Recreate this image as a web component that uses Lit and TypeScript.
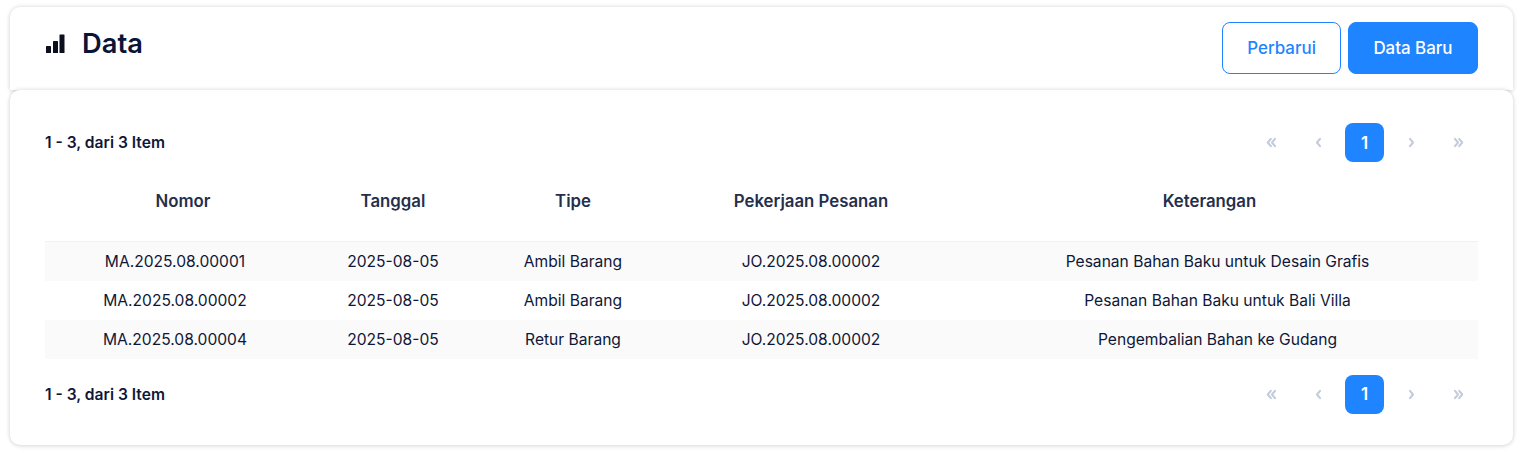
import { LitElement, html, css } from 'lit';
import { customElement } from 'lit/decorators.js';

const rows = [
  ['MA.2025.08.00001', '2025-08-05', 'Ambil Barang', 'JO.2025.08.00002', 'Pesanan Bahan Baku untuk Desain Grafis'],
  ['MA.2025.08.00002', '2025-08-05', 'Ambil Barang', 'JO.2025.08.00002', 'Pesanan Bahan Baku untuk Bali Villa'],
  ['MA.2025.08.00004', '2025-08-05', 'Retur Barang', 'JO.2025.08.00002', 'Pengembalian Bahan ke Gudang'],
];

const columns = ['Nomor', 'Tanggal', 'Tipe', 'Pekerjaan Pesanan', 'Keterangan'];

@customElement('app-root')
export class AppRoot extends LitElement {
  static styles = css`
    :host {
      display: block;
      font-family: Inter, "Noto Sans", sans-serif;
      color: #0f1738;
      background: #fff;
      height: 454px;
      box-sizing: border-box;
      padding: 7px 13px 0 10px;
    }
    .head,
    .body {
      background: #fff;
      box-shadow: 0 0 4px rgba(0, 0, 0, 0.16), 0 2px 5px rgba(0, 0, 0, 0.05);
    }
    .head {
      height: 83px;
      box-sizing: border-box;
      padding: 15px 35px 0;
      display: flex;
      justify-content: space-between;
      align-items: flex-start;
      border-radius: 10px 10px 0 0;
    }
    .title {
      display: flex;
      align-items: center;
      gap: 17px;
      font-size: 27.3px;
      font-weight: 600;
      line-height: 43px;
      color: #0b1437;
    }
    .title svg {
      display: block;
    }
    .actions {
      display: flex;
      gap: 7px;
    }
    .btn {
      height: 52px;
      box-sizing: border-box;
      border-radius: 8px;
      font: 500 16.9px Inter, sans-serif;
      border: 1px solid #1f84ff;
      background: #fff;
      color: #1f84ff;
      padding: 0 24px;
    }
    .btn.primary {
      background: #1f84ff;
      color: #fff;
      padding: 0 24.5px;
    }
    .body {
      position: relative;
      height: 355px;
      box-sizing: border-box;
      padding: 33px 35px 0;
      border-radius: 10px;
    }
    .bar {
      display: flex;
      justify-content: space-between;
      align-items: center;
      height: 39px;
    }
    .count {
      font-size: 15.6px;
      font-weight: 600;
      color: #0f1738;
    }
    .pager {
      display: flex;
      align-items: center;
      gap: 7px;
    }
    .pg {
      width: 40px;
      height: 39px;
      display: flex;
      align-items: center;
      justify-content: center;
    }
    .pg svg {
      display: block;
    }
    .pg.on {
      width: 39px;
      background: #1f84ff;
      color: #fff;
      border-radius: 8px;
      font-size: 16.9px;
      font-weight: 600;
    }
    table {
      width: 1433px;
      border-collapse: collapse;
      table-layout: fixed;
      margin-bottom: 16px;
    }
    th {
      height: 79px;
      padding: 0;
      font-size: 16.8px;
      font-weight: 600;
      color: #252f4a;
      text-align: center;
      border-bottom: 1px solid #f1f1f2;
      box-sizing: border-box;
    }
    th:first-child {
      padding-left: 16px;
    }
    th:last-child {
      padding-right: 16px;
    }
    td {
      height: 39px;
      padding: 0;
      font-size: 15.6px;
      font-weight: 400;
      color: #0f1738;
      text-align: center;
    }
    tbody tr:nth-child(odd) {
      background: #fafafa;
    }
  `;

  renderChevron(kind: string) {
    const paths: Record<string, string> = {
      first: 'M5.8 2.8 L2.8 6.5 L5.8 10.2 M10 2.8 L7 6.5 L10 10.2',
      prev: 'M8 2.8 L5 6.5 L8 10.2',
      next: 'M5 2.8 L8 6.5 L5 10.2',
      last: 'M3 2.8 L6 6.5 L3 10.2 M7.2 2.8 L10.2 6.5 L7.2 10.2',
    };
    return html`<svg width="13" height="13" viewBox="0 0 13 13" fill="none">
      <path d=${paths[kind]} stroke="#c4cbdc" stroke-width="2.1" stroke-linecap="round" stroke-linejoin="round" />
    </svg>`;
  }

  renderBar() {
    return html`<div class="bar">
      <div class="count">1 - 3, dari 3 Item</div>
      <div class="pager">
        <div class="pg">${this.renderChevron('first')}</div>
        <div class="pg">${this.renderChevron('prev')}</div>
        <div class="pg on">1</div>
        <div class="pg">${this.renderChevron('next')}</div>
        <div class="pg">${this.renderChevron('last')}</div>
      </div>
    </div>`;
  }

  render() {
    return html`
      <div class="head">
        <div class="title">
          <svg width="20" height="20" viewBox="0 0 20 20" fill="#0b0f1e">
            <rect x="1" y="12" width="5" height="7" rx="0.6" />
            <rect x="8" y="7" width="5" height="12" rx="0.6" />
            <rect x="14.5" y="0.5" width="5" height="18.5" rx="0.6" />
          </svg>
          Data
        </div>
        <div class="actions">
          <button class="btn">Perbarui</button>
          <button class="btn primary">Data Baru</button>
        </div>
      </div>
      <div class="body">
        ${this.renderBar()}
        <table>
          <colgroup>
            <col style="width:260px" />
            <col style="width:176px" />
            <col style="width:184px" />
            <col style="width:292px" />
            <col />
          </colgroup>
          <thead>
            <tr>${columns.map((c) => html`<th>${c}</th>`)}</tr>
          </thead>
          <tbody>
            ${rows.map((r) => html`<tr>${r.map((c) => html`<td>${c}</td>`)}</tr>`)}
          </tbody>
        </table>
        ${this.renderBar()}
      </div>
    `;
  }
}
